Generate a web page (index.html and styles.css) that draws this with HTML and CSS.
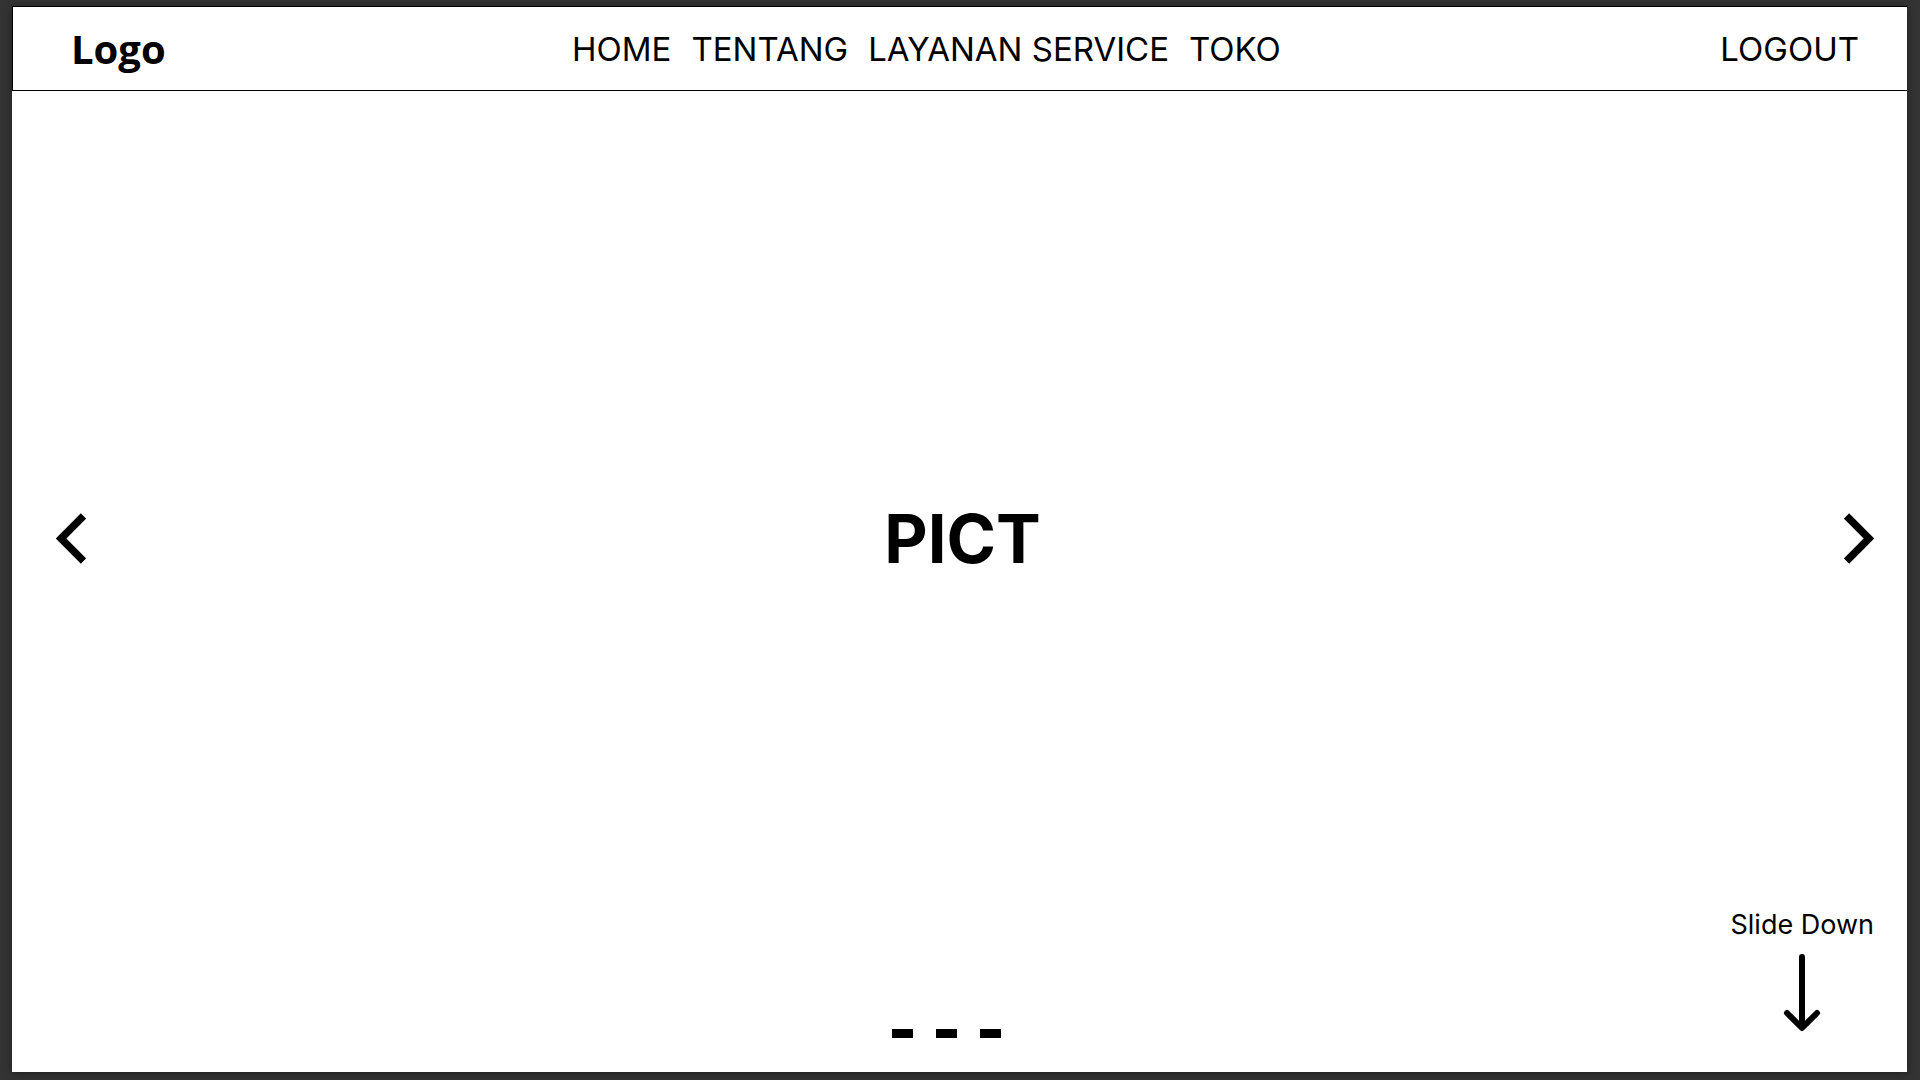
FILE: index.html
```html
<!DOCTYPE html>
<html lang="id">
<head>
<meta charset="utf-8">
<title>Home</title>
<link rel="stylesheet" href="styles.css">
</head>
<body>
<div class="frame">
  <header class="header">
    <a class="logo" href="#">Logo</a>
    <nav class="nav">
      <a href="#">HOME</a>
      <a href="#">TENTANG</a>
      <a href="#">LAYANAN SERVICE</a>
      <a href="#">TOKO</a>
    </nav>
    <a class="logout" href="#">LOGOUT</a>
  </header>
  <main class="hero">
    <section class="carousel">
      <button class="arrow" type="button" aria-label="Previous">
        <svg width="30" height="52" viewBox="0 0 30 52"><path d="M27.500 3 L5 25.500 L27.500 48" fill="none" stroke="#000" stroke-width="7.500"/></svg>
      </button>
      <h1 class="title">PICT</h1>
      <button class="arrow" type="button" aria-label="Next">
        <svg width="30" height="52" viewBox="0 0 30 52"><path d="M2.500 3 L25 25.500 L2.500 48" fill="none" stroke="#000" stroke-width="7.500"/></svg>
      </button>
    </section>
    <div class="bottom">
      <div class="dots">
        <button class="dot" type="button" aria-label="Slide 1"></button>
        <button class="dot" type="button" aria-label="Slide 2"></button>
        <button class="dot" type="button" aria-label="Slide 3"></button>
      </div>
      <a class="down" href="#">
        <span>Slide Down</span>
        <svg width="38" height="80" viewBox="0 0 38 80"><path d="M19 4 V74 M4 60 L19 75 L34 60" fill="none" stroke="#000" stroke-width="6" stroke-linecap="round" stroke-linejoin="round"/></svg>
      </a>
    </div>
  </main>
</div>
</body>
</html>
```
FILE: styles.css
```css
* {
  box-sizing: border-box;
}

body {
  margin: 0;
  padding: 6px 13px 8px 12px;
  background: #333;
  color: #000;
  font-family: Inter, "Open Sans", sans-serif;
}

a {
  color: inherit;
  text-decoration: none;
}

button {
  padding: 0;
  border: 0;
  background: none;
  cursor: pointer;
}

svg {
  display: block;
}

.frame {
  display: flex;
  flex-direction: column;
  min-height: calc(100vh - 14px);
  background: #fff;
  box-shadow: 0 1px 8px rgba(0, 0, 0, 0.4);
}

.header {
  display: grid;
  grid-template-columns: 13fr auto 15fr;
  align-items: center;
  padding: 15px 48px 14px 58px;
  border: 1px solid #000;
  border-right: 0;
  font-size: 33px;
  line-height: 54px;
}

.logo {
  font-family: "Open Sans", sans-serif;
  font-size: 40px;
  font-weight: 700;
}

.nav {
  display: flex;
  gap: 20px;
}

.logout {
  justify-self: end;
}

.hero {
  flex: 1;
  display: flex;
  flex-direction: column;
}

.carousel {
  flex: 1;
  display: grid;
  grid-template-columns: auto 1fr auto;
  align-items: center;
  padding: 82px 33px 0 44px;
}

.title {
  margin: 0;
  padding-right: 5px;
  font-size: 67px;
  line-height: 80px;
  text-align: center;
}

.bottom {
  display: grid;
  grid-template-columns: 1fr auto 1fr;
  align-items: end;
  padding: 0 33px 34px 7px;
}

.dots {
  grid-column: 2;
  display: flex;
  gap: 23px;
}

.dot {
  width: 21px;
  height: 9px;
  background: #000;
}

.down {
  justify-self: end;
  display: flex;
  flex-direction: column;
  align-items: center;
  gap: 8px;
  padding-bottom: 5px;
  font-size: 27px;
  line-height: 40px;
}
```
